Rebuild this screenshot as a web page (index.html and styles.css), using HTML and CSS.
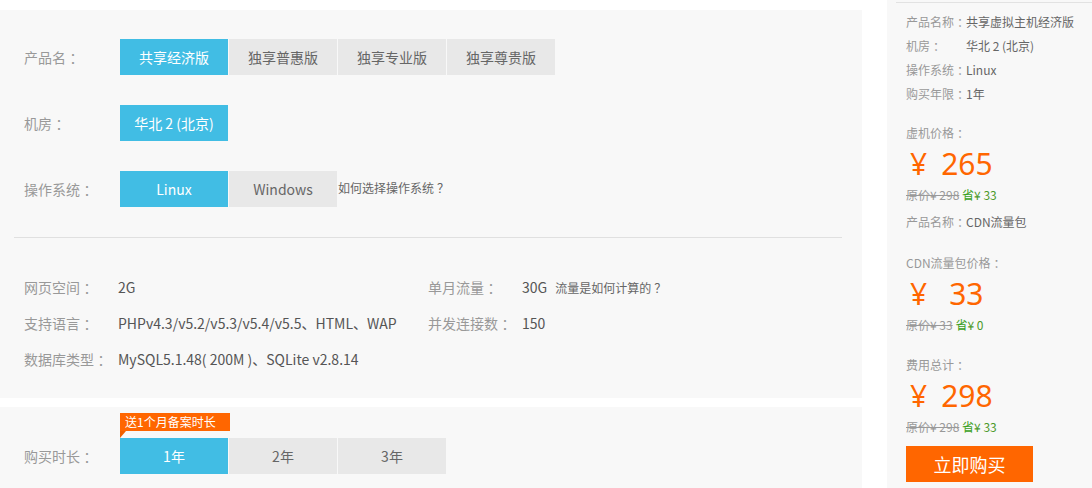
FILE: index.html
```html
<!DOCTYPE html>
<html lang="zh-CN">
<head>
<meta charset="utf-8">
<title>共享虚拟主机</title>
<link rel="stylesheet" href="styles.css">
</head>
<body>
<div class="page">
  <div class="main">
    <section class="panel config">
      <div class="opt-row">
        <div class="opt-label">产品名<span class="p">：</span></div>
        <div class="btns">
          <span class="btn on">共享经济版</span>
          <span class="btn">独享普惠版</span>
          <span class="btn">独享专业版</span>
          <span class="btn">独享尊贵版</span>
        </div>
      </div>
      <div class="opt-row">
        <div class="opt-label">机房<span class="p">：</span></div>
        <div class="btns">
          <span class="btn on">华北 2 (北京)</span>
        </div>
      </div>
      <div class="opt-row">
        <div class="opt-label">操作系统<span class="p">：</span></div>
        <div class="btns">
          <span class="btn on">Linux</span>
          <span class="btn">Windows</span>
          <span class="hint">如何选择操作系统<span class="p">？</span></span>
        </div>
      </div>
      <div class="divider"></div>
      <div class="specs">
        <div class="spec-label">网页空间<span class="p">：</span></div>
        <div class="spec-val">2G</div>
        <div class="spec-label">单月流量<span class="p">：</span></div>
        <div class="spec-val">30G <span class="hint small">流量是如何计算的<span class="p">？</span></span></div>
        <div class="spec-label">支持语言<span class="p">：</span></div>
        <div class="spec-val">PHPv4.3/v5.2/v5.3/v5.4/v5.5、HTML、WAP</div>
        <div class="spec-label">并发连接数<span class="p">：</span></div>
        <div class="spec-val">150</div>
        <div class="spec-label">数据库类型<span class="p">：</span></div>
        <div class="spec-val wide">MySQL5.1.48( 200M )、SQLite v2.8.14</div>
      </div>
    </section>
    <section class="panel duration">
      <div class="opt-label dur-label">购买时长<span class="p">：</span></div>
      <div class="dur-body">
        <div class="tag">送1个月备案时长</div>
        <div class="btns">
          <span class="btn on">1年</span>
          <span class="btn">2年</span>
          <span class="btn">3年</span>
        </div>
      </div>
    </section>
  </div>
  <aside class="side">
    <div class="side-inner">
      <div class="line"><span class="k">产品名称<span class="p">：</span></span><span class="v">共享虚拟主机经济版</span></div>
      <div class="line"><span class="k fixed">机房<span class="p">：</span></span><span class="v">华北 2 (北京)</span></div>
      <div class="line"><span class="k">操作系统<span class="p">：</span></span><span class="v">Linux</span></div>
      <div class="line"><span class="k">购买年限<span class="p">：</span></span><span class="v">1年</span></div>

      <div class="line k gap1">虚机价格<span class="p">：</span></div>
      <div class="price"><span class="yen">¥</span><span class="num">265</span></div>
      <div class="line"><s class="orig">原价¥ 298</s> <span class="save"><b>省</b>¥ 33</span></div>
      <div class="line cdn"><span class="k">产品名称<span class="p">：</span></span><span class="v">CDN流量包</span></div>

      <div class="line k gap2">CDN流量包价格<span class="p">：</span></div>
      <div class="price"><span class="yen">¥</span><span class="num wide">33</span></div>
      <div class="line"><s class="orig">原价¥ 33</s> <span class="save"><b>省</b>¥ 0</span></div>

      <div class="line k gap3">费用总计<span class="p">：</span></div>
      <div class="price"><span class="yen">¥</span><span class="num">298</span></div>
      <div class="line"><s class="orig">原价¥ 298</s> <span class="save"><b>省</b>¥ 33</span></div>
      <div class="buy">立即购买</div>
    </div>
  </aside>
</div>
</body>
</html>
```

FILE: styles.css
```css
* { box-sizing: border-box; }
html, body { margin: 0; padding: 0; background: #fff; }
body {
  font-family: "Noto Sans CJK SC", "Noto Sans", sans-serif;
  font-size: 14px;
  color: #555;
}
/* centred full-width punctuation, as in the original font */
.p {
  display: inline-block;
  width: 1em;
  text-align: center;
  font-feature-settings: "halt" 1;
}
.page {
  display: flex;
  width: 1092px;
  height: 488px;
  overflow: hidden;
}
.main {
  width: 862px;
  display: flex;
  flex-direction: column;
}
.panel { background: #f8f8f8; }
.config {
  margin-top: 10px;
  height: 388px;
  padding-top: 29px;
}
.opt-row {
  display: flex;
  align-items: center;
  height: 36px;
  margin-bottom: 30px;
}
.opt-label {
  width: 120px;
  padding-left: 24px;
  color: #999;
  font-size: 14px;
}
.btns { display: flex; align-items: center; gap: 1px; }
.btn {
  width: 108px;
  height: 36px;
  line-height: 36px;
  text-align: center;
  background: #e8e8e8;
  color: #666;
  font-size: 14px;
}
.btn.on { background: #41bde4; color: #fff; }
.hint { font-size: 12px; color: #666; margin-top: -3px; }
.hint.small { margin-left: 5px; }
.divider {
  height: 1px;
  background: #e0e0e0;
  margin: 0 20px 0 14px;
}
.specs {
  margin-top: 31px;
  display: grid;
  grid-template-columns: 94px 310px 94px 1fr;
  grid-auto-rows: 36px;
  padding-left: 24px;
  align-items: center;
}
.spec-label { color: #999; white-space: nowrap; }
.spec-val { color: #555; }
.spec-val.wide { grid-column: 2 / 5; }
.duration {
  margin-top: 9px;
  flex: 1;
  display: flex;
  align-items: flex-end;
  padding-bottom: 14px;
}
.dur-label { height: 36px; line-height: 36px; }
.dur-body { display: flex; flex-direction: column; }
.tag {
  position: relative;
  width: 110px;
  height: 18px;
  line-height: 18px;
  background: #ff6600;
  color: #fff;
  font-size: 12px;
  padding-left: 5px;
  margin-bottom: 7px;
}
.tag::after {
  content: "";
  position: absolute;
  left: 0;
  top: 18px;
  border-top: 7px solid #f06000;
  border-right: 6px solid transparent;
}
.side {
  margin-left: 25px;
  width: 205px;
  background: #f8f8f8;
  padding: 2px 0 0 9px;
}
.side-inner {
  border-top: 1px solid #e2e2e2;
  padding: 7px 0 0 10px;
  font-size: 12px;
}
.line { height: 24px; line-height: 24px; white-space: nowrap; }
.k { color: #999; }
.k.fixed { display: inline-block; width: 60px; }
.v { color: #666; }
.gap1 { margin-top: 15px; }
.cdn { margin-top: 3px; }
.gap2 { margin-top: 17px; }
.gap3 { margin-top: 16px; }
.price {
  height: 38px;
  line-height: 38px;
  font-size: 30px;
  color: #ff6600;
  padding-left: 4px;
  font-family: "Noto Sans", "Noto Sans CJK SC", sans-serif;
  font-weight: 400;
}
.num { margin-left: 14px; }
.num.wide { margin-left: 22px; }
.orig { color: #999; }
.save { color: #4c9a2a; }
.save b { font-weight: normal; color: #3aa022; }
.buy {
  margin-top: 7px;
  width: 127px;
  height: 36px;
  line-height: 36px;
  background: #ff6600;
  color: #fff;
  font-size: 18px;
  text-align: center;
}
```
